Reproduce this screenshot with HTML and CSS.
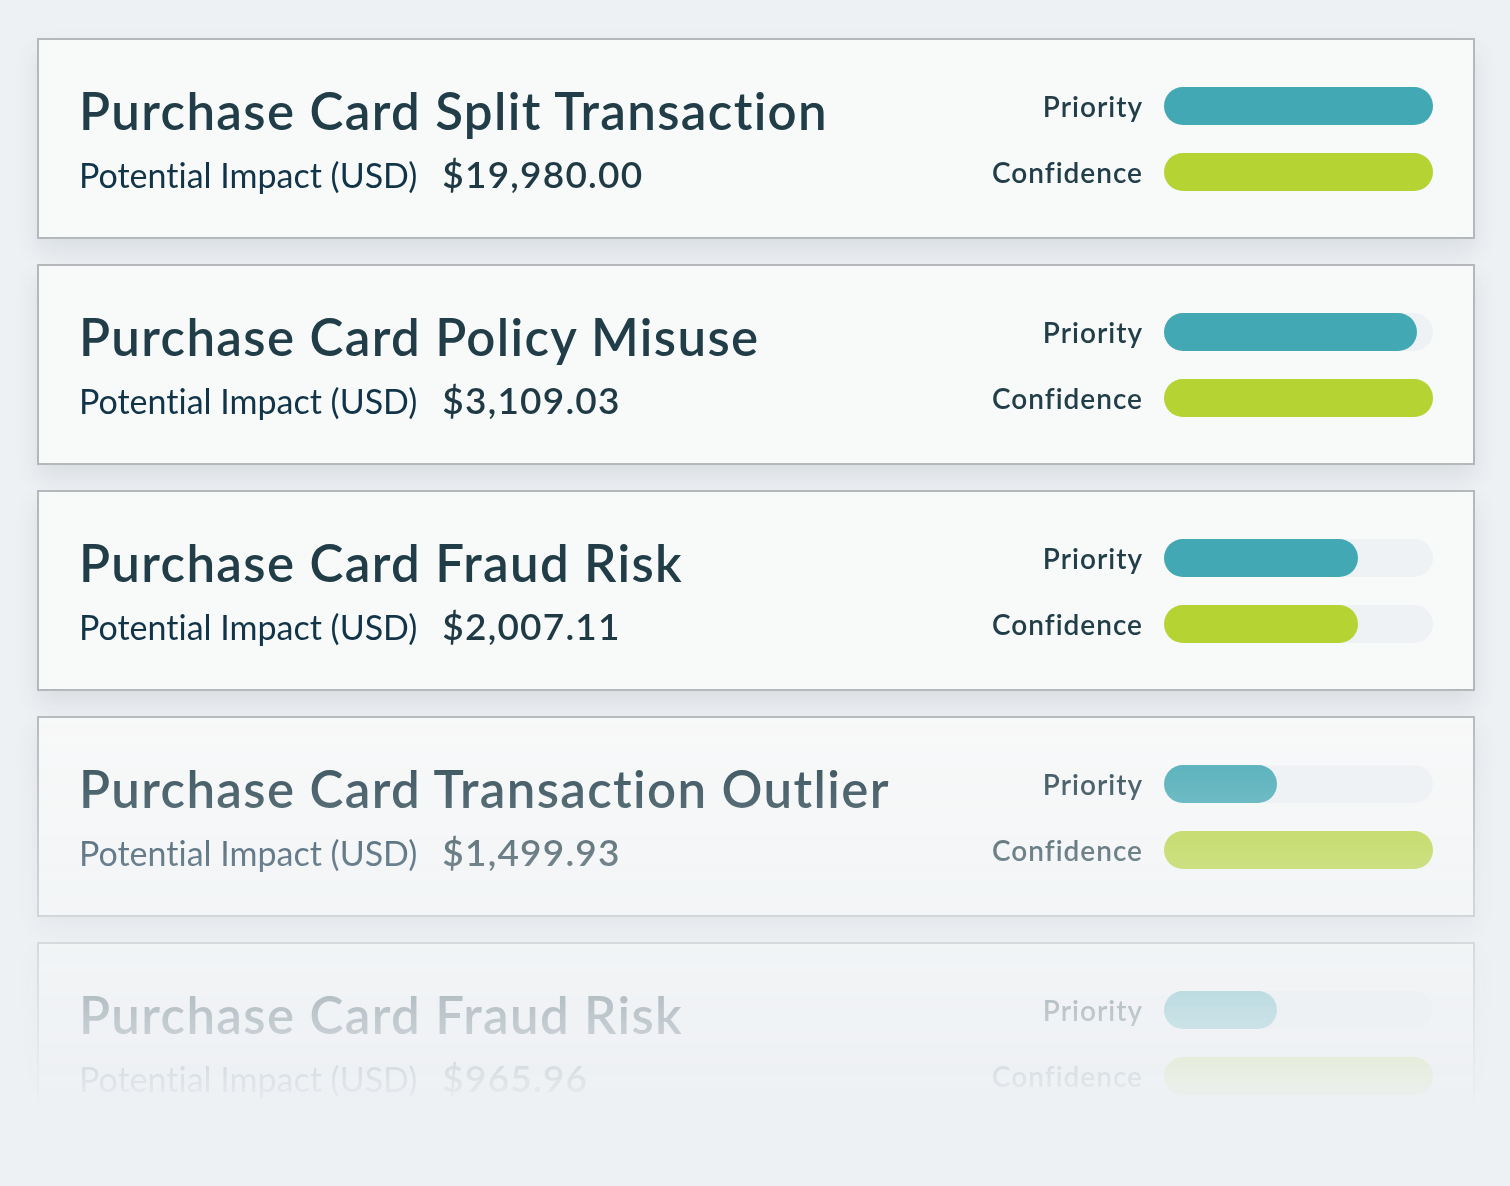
FILE: index.html
```html
<!DOCTYPE html>
<html lang="en">
<head>
<meta charset="utf-8">
<title>Purchase Card Alerts</title>
<link rel="stylesheet" href="styles.css">
</head>
<body>
<main class="list">
  <section class="card">
    <div class="info">
      <h2 class="title">Purchase Card Split Transaction</h2>
      <div class="impact"><span class="impact-label">Potential Impact (USD)</span><span class="amount">$19,980.00</span></div>
    </div>
    <div class="metrics">
      <span class="metric-label">Priority</span><div class="track"><div class="fill teal" style="width:100%"></div></div>
      <span class="metric-label">Confidence</span><div class="track"><div class="fill lime" style="width:100%"></div></div>
    </div>
  </section>
  <section class="card">
    <div class="info">
      <h2 class="title">Purchase Card Policy Misuse</h2>
      <div class="impact"><span class="impact-label">Potential Impact (USD)</span><span class="amount">$3,109.03</span></div>
    </div>
    <div class="metrics">
      <span class="metric-label">Priority</span><div class="track"><div class="fill teal" style="width:94%"></div></div>
      <span class="metric-label">Confidence</span><div class="track"><div class="fill lime" style="width:100%"></div></div>
    </div>
  </section>
  <section class="card">
    <div class="info">
      <h2 class="title">Purchase Card Fraud Risk</h2>
      <div class="impact"><span class="impact-label">Potential Impact (USD)</span><span class="amount">$2,007.11</span></div>
    </div>
    <div class="metrics">
      <span class="metric-label">Priority</span><div class="track"><div class="fill teal" style="width:72%"></div></div>
      <span class="metric-label">Confidence</span><div class="track"><div class="fill lime" style="width:72%"></div></div>
    </div>
  </section>
  <section class="card">
    <div class="info">
      <h2 class="title">Purchase Card Transaction Outlier</h2>
      <div class="impact"><span class="impact-label">Potential Impact (USD)</span><span class="amount">$1,499.93</span></div>
    </div>
    <div class="metrics">
      <span class="metric-label">Priority</span><div class="track"><div class="fill teal" style="width:42%"></div></div>
      <span class="metric-label">Confidence</span><div class="track"><div class="fill lime" style="width:100%"></div></div>
    </div>
  </section>
  <section class="card">
    <div class="info">
      <h2 class="title">Purchase Card Fraud Risk</h2>
      <div class="impact"><span class="impact-label">Potential Impact (USD)</span><span class="amount">$965.96</span></div>
    </div>
    <div class="metrics">
      <span class="metric-label">Priority</span><div class="track"><div class="fill teal" style="width:42%"></div></div>
      <span class="metric-label">Confidence</span><div class="track"><div class="fill lime" style="width:100%"></div></div>
    </div>
  </section>
</main>
</body>
</html>
```
FILE: styles.css
```css
html, body {
  margin: 0;
  padding: 0;
}
body {
  background: #eef1f4;
  font-family: Lato, "Liberation Sans", sans-serif;
  font-variant-ligatures: none;
  height: 1186px;
  overflow: hidden;
}
.list {
  display: flex;
  flex-direction: column;
  gap: 25px;
  padding: 38px 35px 0 37px;
  height: 1186px;
  box-sizing: border-box;
  -webkit-mask-image: linear-gradient(to bottom, #000 0, #000 700px, rgba(0,0,0,0) 1110px);
  mask-image: linear-gradient(to bottom, #000 0, #000 700px, rgba(0,0,0,0) 1110px);
}
.card {
  flex: 0 0 auto;
  box-sizing: border-box;
  height: 201px;
  border: 2px solid #b5b8ba;
  background: #f8f9f9;
  box-shadow: 0 12px 22px rgba(40, 60, 70, 0.10);
  display: flex;
  align-items: center;
  justify-content: space-between;
  padding: 0 40px 0 40px;
}
.info {
  display: flex;
  flex-direction: column;
  gap: 10px;
}
.title {
  margin: 0;
  font-size: 51px;
  font-weight: 600;
  letter-spacing: 1.35px;
  line-height: 60px;
  color: #203d48;
}
.impact {
  display: flex;
  align-items: baseline;
  gap: 25px;
}
.impact-label {
  font-size: 34px;
  color: #123449;
}
.amount {
  font-size: 37px;
  font-weight: 600;
  letter-spacing: 1.2px;
  color: #1f3a44;
}
.metrics {
  display: grid;
  grid-template-columns: auto 269px;
  column-gap: 21px;
  row-gap: 28px;
  align-items: center;
}
.metric-label {
  text-align: right;
  font-size: 28px;
  font-weight: 600;
  letter-spacing: 1px;
  color: #213e49;
}
.track {
  height: 38px;
  border-radius: 19px;
  background: #eff2f4;
}
.fill {
  height: 100%;
  border-radius: 19px;
}
.teal { background: #42a8b4; }
.lime { background: #b5d332; }
```
